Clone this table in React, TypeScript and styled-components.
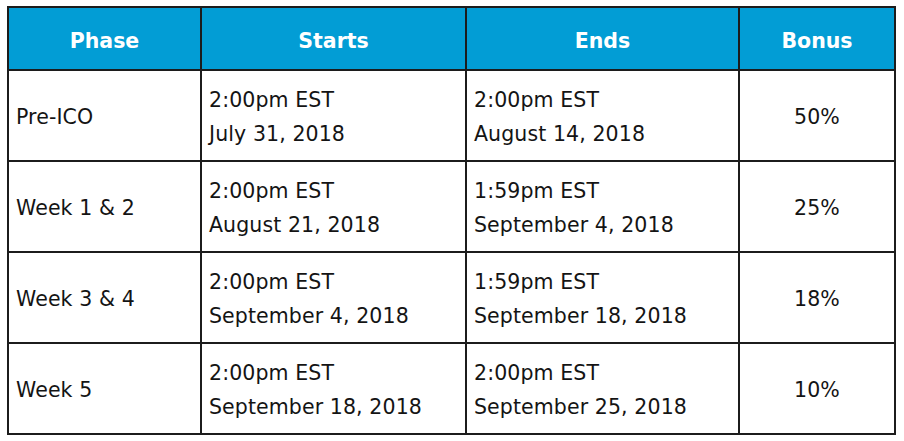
import React from 'react';
import styled, { createGlobalStyle } from 'styled-components';

const GlobalStyle = createGlobalStyle`
    body {
        margin: 0;
        background: #ffffff;
        font-family: "DejaVu Sans", "Liberation Sans", sans-serif;
    }
`;

const Page = styled('div')`
    padding: 6px 0 0 7px;
`;

const StyledTable = styled('table')`
    border-collapse: collapse;
    border: 2px solid #1c1c1c;
    table-layout: fixed;
    width: 889px;
`;

const HeadCell = styled('th')<{ $width?: number }>`
    width: ${({ $width }) => ($width ? `${$width}px` : 'auto')};
    height: 57px;
    background-color: #029dd5;
    color: #ffffff;
    font-weight: bold;
    font-size: 20.5px;
    text-align: center;
    border: 2px solid #1c1c1c;
    padding: 4px 0 0 0;
`;

const Cell = styled('td')<{ $center?: boolean }>`
    height: 86px;
    border: 2px solid #1c1c1c;
    color: #141414;
    font-size: 20.5px;
    letter-spacing: 0.1px;
    line-height: 34px;
    padding: 3px 0 0 ${({ $center }) => ($center ? '0' : '7px')};
    text-align: ${({ $center }) => ($center ? 'center' : 'left')};
    vertical-align: middle;
`;

const Line = styled('div')`
    white-space: nowrap;
`;

const rows = [
    { phase: 'Pre-ICO', starts: ['2:00pm EST', 'July 31, 2018'], ends: ['2:00pm EST', 'August 14, 2018'], bonus: '50%' },
    { phase: 'Week 1 & 2', starts: ['2:00pm EST', 'August 21, 2018'], ends: ['1:59pm EST', 'September 4, 2018'], bonus: '25%' },
    { phase: 'Week 3 & 4', starts: ['2:00pm EST', 'September 4, 2018'], ends: ['1:59pm EST', 'September 18, 2018'], bonus: '18%' },
    { phase: 'Week 5', starts: ['2:00pm EST', 'September 18, 2018'], ends: ['2:00pm EST', 'September 25, 2018'], bonus: '10%' },
];

export default function App() {
    return (
        <Page>
            <GlobalStyle />
            <StyledTable>
                <thead>
                    <tr>
                        <HeadCell $width={191}>Phase</HeadCell>
                        <HeadCell $width={263}>Starts</HeadCell>
                        <HeadCell $width={271}>Ends</HeadCell>
                        <HeadCell>Bonus</HeadCell>
                    </tr>
                </thead>
                <tbody>
                    {rows.map((r) => (
                        <tr key={r.phase}>
                            <Cell>{r.phase}</Cell>
                            <Cell>
                                {r.starts.map((l) => <Line key={l}>{l}</Line>)}
                            </Cell>
                            <Cell>
                                {r.ends.map((l) => <Line key={l}>{l}</Line>)}
                            </Cell>
                            <Cell $center>{r.bonus}</Cell>
                        </tr>
                    ))}
                </tbody>
            </StyledTable>
        </Page>
    );
}
